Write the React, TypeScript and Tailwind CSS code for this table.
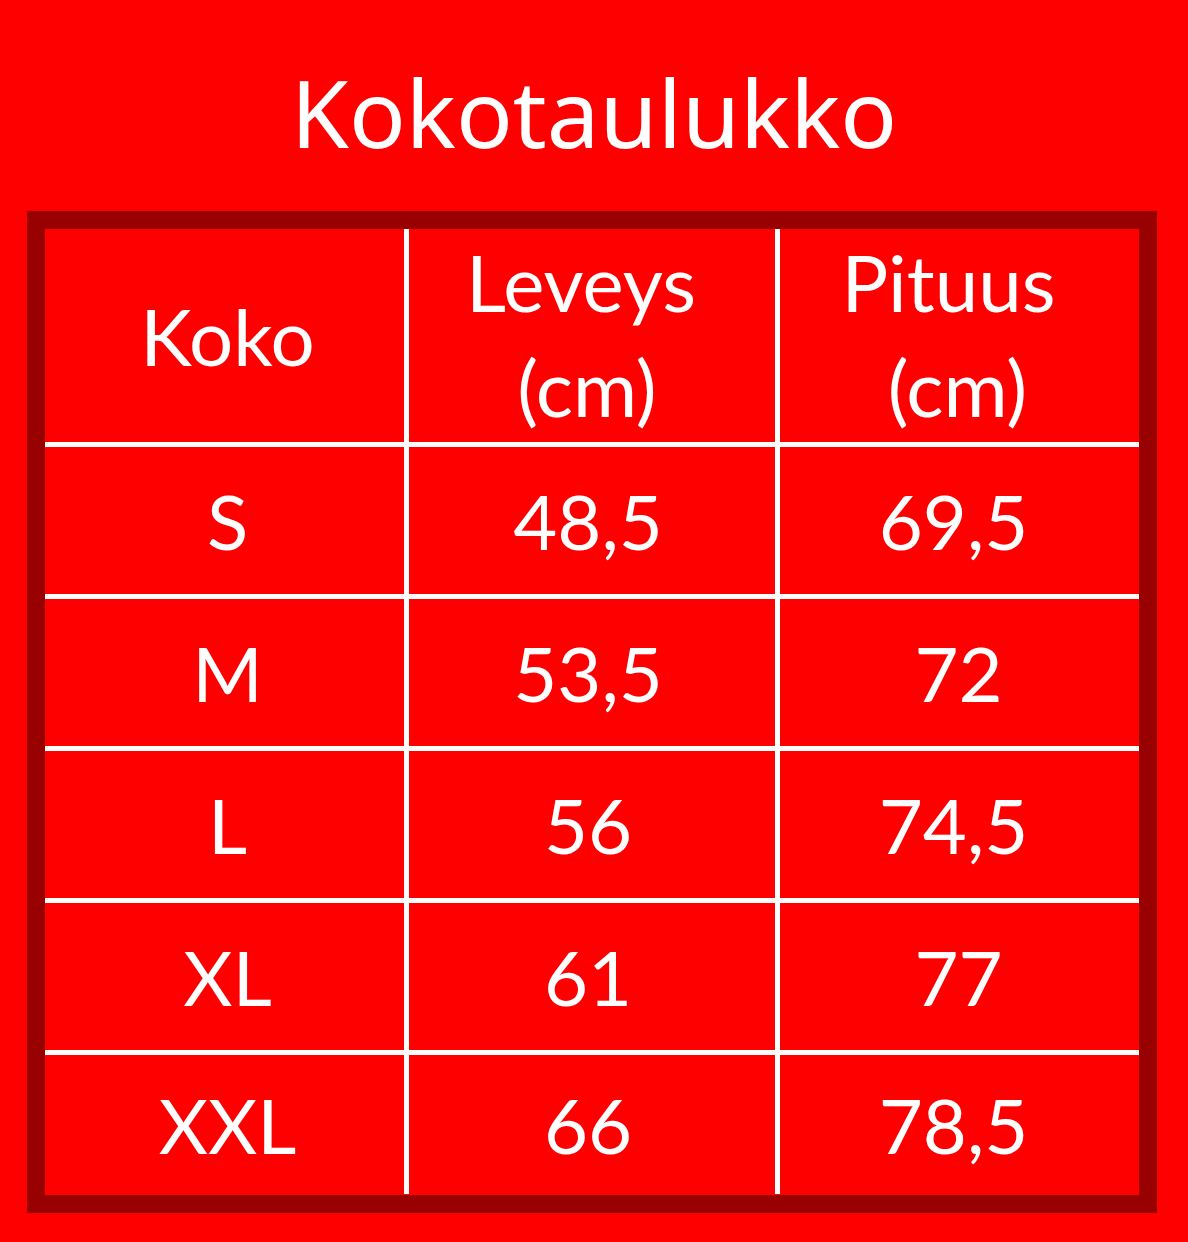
import React from "react";

const rows: [string, string, string][] = [
  ["S", "48,5", "69,5"],
  ["M", "53,5", "72"],
  ["L", "56", "74,5"],
  ["XL", "61", "77"],
  ["XXL", "66", "78,5"],
];

function Cell({ children }: { children: React.ReactNode }) {
  return (
    <div className="bg-[#ff0000] flex items-center justify-center text-white text-[76px] leading-none">
      {children}
    </div>
  );
}

export default function App() {
  return (
    <div className="w-[1188px] h-[1242px] bg-[#ff0000] pt-[65px] overflow-hidden">
      <h1 className="h-[94px] text-center text-white text-[94px] leading-none font-normal font-['Noto_Sans','Open_Sans',sans-serif]">
        Kokotaulukko
      </h1>
      <div className="mt-[52px] ml-[27px] w-[1130px] h-[1002px] border-[18px] border-[#990000]">
        <div className="grid grid-cols-[359px_366px_359px] grid-rows-[213px_147px_147px_147px_147px_139px] gap-[5px] bg-white w-[1094px] h-[965px] font-['Lato','Open_Sans',sans-serif]">
          <Cell>
            <span className="pl-[6px] text-[78px]">Koko</span>
          </Cell>
          <div className="bg-[#ff0000] flex flex-col items-center justify-center text-white text-[78px] leading-[105px] pb-[2px]">
            <span className="pr-[22px]">Leveys</span>
            <span className="pr-[10px]">(cm)</span>
          </div>
          <div className="bg-[#ff0000] flex flex-col items-center justify-center text-white text-[78px] leading-[105px] pb-[2px]">
            <span className="pr-[22px]">Pituus</span>
            <span className="pr-[4px]">(cm)</span>
          </div>
          {rows.map((r) => (
            <React.Fragment key={r[0]}>
              <Cell>
                <span className="pl-[6px]">{r[0]}</span>
              </Cell>
              <Cell>
                <span className="pr-[8px]">{r[1]}</span>
              </Cell>
              <Cell>
                <span className={r[2].includes(",") ? "pr-[12px]" : "pr-[2px]"}>{r[2]}</span>
              </Cell>
            </React.Fragment>
          ))}
        </div>
      </div>
    </div>
  );
}
